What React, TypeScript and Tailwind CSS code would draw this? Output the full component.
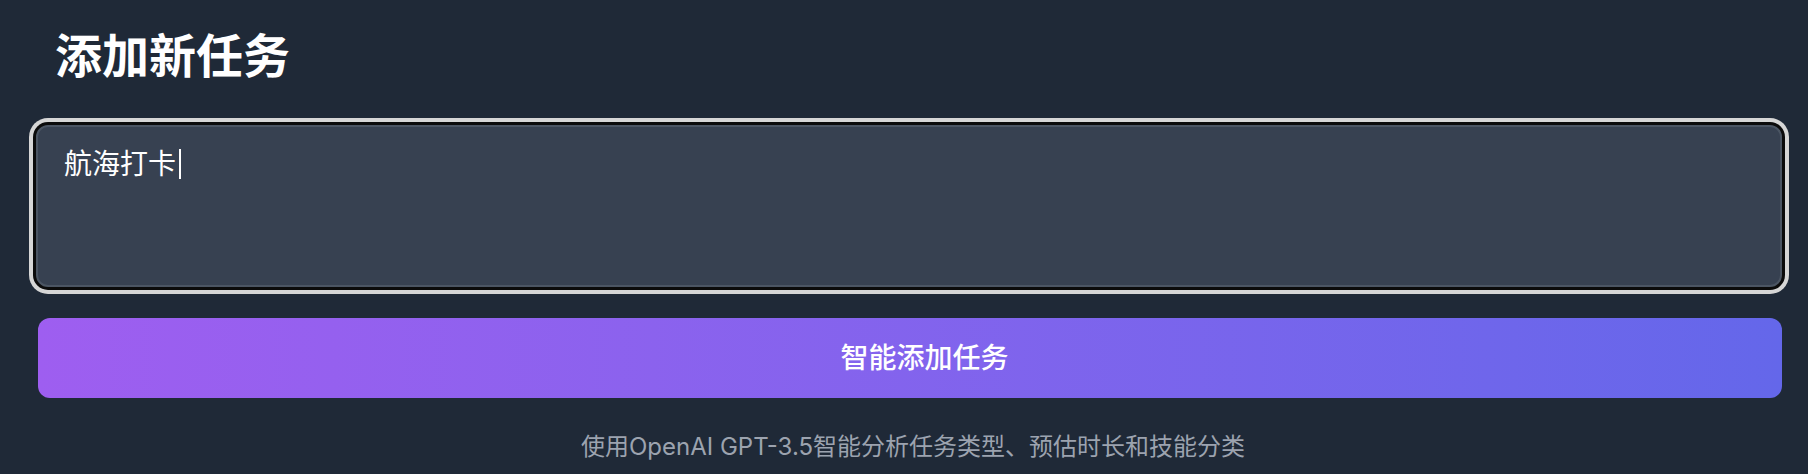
import { useState } from 'react';

// Add-task panel: title, task input, AI submit button, hint line
function App() {
  const [task] = useState('航海打卡');

  return (
    <div className="min-h-screen w-full bg-[#1f2937] pl-[36px] pr-[26px] pt-[24px] font-['Inter','Noto_Sans_CJK_SC',sans-serif]">
      <h2 className="ml-[19px] text-[47px] leading-[64px] font-bold text-white">
        添加新任务
      </h2>

      {/* focused input, with the double focus ring */}
      <div
        role="textbox"
        className="mt-[37px] h-[162px] rounded-[12px] border-2 border-[#4b5563] bg-[#374151] px-[26px] pt-[16px] text-[28px] leading-[42px] text-white shadow-[0_0_0_3px_#0b0b0b,0_0_0_7px_#d6d6d6]"
      >
        {task}
        <span className="ml-[3px] inline-block h-[30px] w-[2px] translate-y-[5px] bg-white" />
      </div>

      <button
        type="button"
        className="mt-[31px] ml-[2px] flex h-[80px] w-[calc(100%-2px)] items-center justify-center rounded-[12px] bg-gradient-to-r from-[#9e5ef0] to-[#6467ea] pl-[29px] text-[28px] font-medium text-white"
      >
        智能添加任务
      </button>

      <p className="mt-[31px] pl-[8px] text-center text-[24px] leading-[36px] text-[#9ca3af]">
        使用OpenAI GPT-3.5智能分析任务类型、预估时长和技能分类
      </p>
    </div>
  );
}

export default App;
